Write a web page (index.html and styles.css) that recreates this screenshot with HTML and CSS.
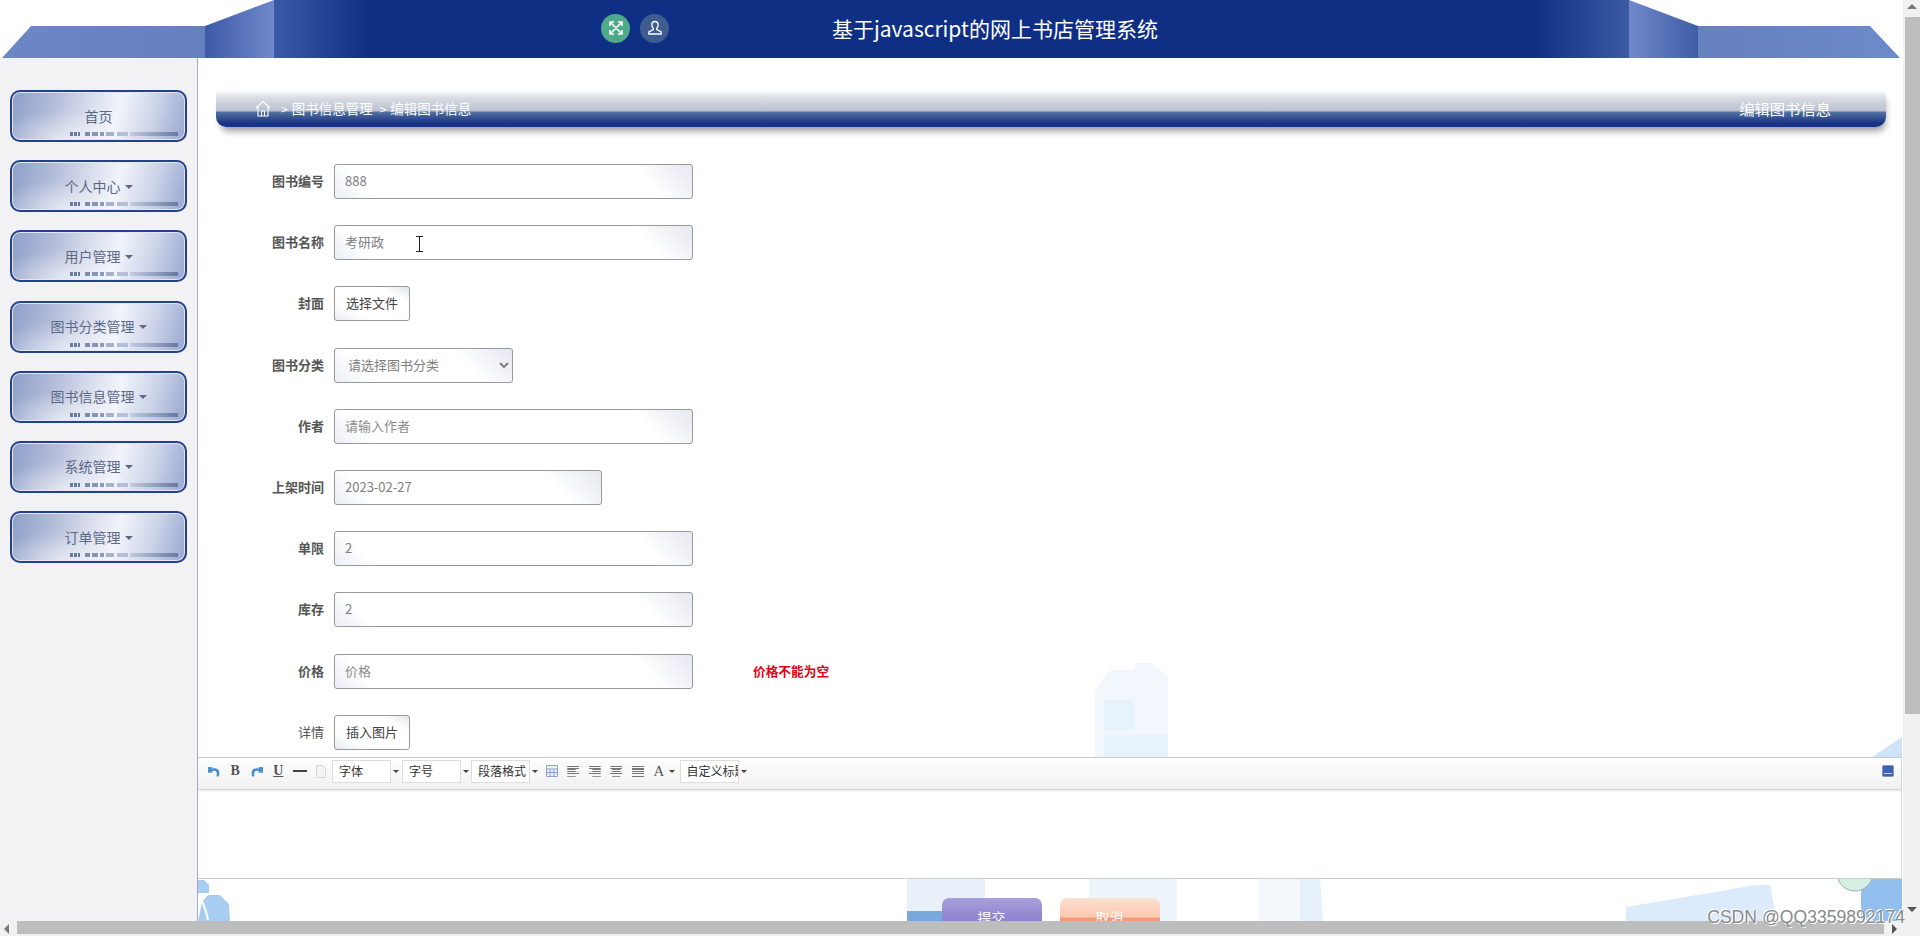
FILE: index.html
```html
<!DOCTYPE html>
<html lang="zh-CN">
<head>
    <meta charset="UTF-8">
    <title>基于javascript的网上书店管理系统</title>
    <link rel="stylesheet" href="styles.css">
</head>
<body>
<div class="page">
    <div class="viewport">
        <!-- 顶部 -->
        <header class="header">
            <div class="wing wing-left"></div>
            <div class="block block-left"></div>
            <div class="head-main">
                <span class="round round-green">
                    <svg width="16" height="16" viewBox="0 0 16 16" fill="none" stroke="#fff" stroke-width="1.6"><path d="M2 2l12 12M14 2L2 14M2 6V2h4M10 2h4v4M14 10v4h-4M6 14H2v-4"/></svg>
                </span>
                <span class="round round-blue">
                    <svg width="16" height="16" viewBox="0 0 16 16" fill="none" stroke="#fff" stroke-width="1.3"><path d="M8 1.500c-2 0-3.200 1.500-3.200 3.400 0 1.500.7 2.700 1.500 3.400v1.200L1.800 12v2h12.400v-2l-4.500-2.500V8.300c.8-.7 1.500-1.900 1.500-3.400 0-1.900-1.200-3.400-3.200-3.400z"/></svg>
                </span>
                <h1 class="title">基于javascript的网上书店管理系统</h1>
            </div>
            <div class="block block-right"></div>
            <div class="wing wing-right"></div>
        </header>

        <div class="content">
            <!-- 左侧菜单 -->
            <nav class="sidebar">
                <a class="menu-item"><span>首页</span><i class="menu-bar"></i></a>
                <a class="menu-item"><span class="caret">个人中心</span><i class="menu-bar"></i></a>
                <a class="menu-item"><span class="caret">用户管理</span><i class="menu-bar"></i></a>
                <a class="menu-item"><span class="caret">图书分类管理</span><i class="menu-bar"></i></a>
                <a class="menu-item"><span class="caret">图书信息管理</span><i class="menu-bar"></i></a>
                <a class="menu-item"><span class="caret">系统管理</span><i class="menu-bar"></i></a>
                <a class="menu-item"><span class="caret">订单管理</span><i class="menu-bar"></i></a>
            </nav>

            <main class="main">
                <!-- 背景图 -->
                <svg class="backdrop" width="1705" height="863" viewBox="198 58 1705 863">
                    <path fill="#f1f7fc" d="M1095 690l15-20h24l2-7h16l16 14v80h-73z"/>
                    <path fill="#e6f3fb" d="M1104 700h30v30h-30zM1104 735h64v22h-64z"/>
                    <path fill="#cfe3f8" d="M1872 757l30-20v20z"/>
                    <path fill="#a9cdf0" d="M198 880h6l5 5v8h-11zM202 902l6-7h12l9 9 1 17h-32z"/>
                    <path fill="none" stroke="#fff" stroke-width="2" d="M200 898c4 6 6 12 8 22"/>
                    <path fill="#e8f1fa" d="M907 879h78v42h-78z"/>
                    <path fill="#7aa8de" d="M907 911h36v10h-36z"/>
                    <path fill="#edf5fb" d="M1089 879h88v42h-88z"/>
                    <path fill="#f5f9fd" d="M1258 879h42v42h-42z"/>
                    <path fill="#e6f1fb" d="M1300 879h20l3 42h-23z"/>
                    <path fill="#dcebfb" d="M1626 907l130-22h14l7 36h-151z"/>
                    <path fill="#93bfee" d="M1861 879h41v42h-41z"/>
                    <circle cx="1855" cy="873" r="18" fill="#d6efe4" stroke="#93b5a8"/>
                </svg>

                <div class="breadcrumb">
                    <div class="crumbs">
                        <svg width="16" height="17" viewBox="0 0 16 17" fill="none" stroke="#fff" stroke-width="1.1"><path d="M1 8l7-6.500L15 8M3 7v9h10V7M6.500 16v-5M9.500 16v-5M6.500 11h3"/></svg>
                        <span class="sep">&gt;</span><span>图书信息管理</span><span class="sep">&gt;</span><span>编辑图书信息</span>
                    </div>
                    <div class="crumb-title">编辑图书信息</div>
                </div>

                <form class="form">
                    <div class="row"><label>图书编号</label><input class="input" value="888"></div>
                    <div class="row">
                        <label>图书名称</label><input class="input" value="考研政">
                        <svg class="ibeam" width="9" height="16" viewBox="0 0 9 16" fill="none" stroke="#222"><path d="M1 .5h7M4.500.5v15M1 15.500h7"/></svg>
                    </div>
                    <div class="row"><label>封面</label><button type="button" class="btn-plain">选择文件</button></div>
                    <div class="row">
                        <label>图书分类</label>
                        <select class="input input-select"><option>请选择图书分类</option></select>
                    </div>
                    <div class="row"><label>作者</label><input class="input" placeholder="请输入作者"></div>
                    <div class="row"><label>上架时间</label><input class="input input-date" value="2023-02-27"></div>
                    <div class="row"><label>单限</label><input class="input" value="2"></div>
                    <div class="row"><label>库存</label><input class="input" value="2"></div>
                    <div class="row"><label>价格</label><input class="input" placeholder="价格"><span class="error">价格不能为空</span></div>
                    <div class="row"><label class="label-thin">详情</label><button type="button" class="btn-plain">插入图片</button></div>
                </form>

                <!-- 富文本编辑器 -->
                <div class="editor">
                    <div class="toolbar">
                        <span class="tool">
                            <svg width="12" height="11" viewBox="0 0 12 11" fill="#4a90d0"><path d="M0 1l5 .2-1.500 1.500C6 2 9 2.200 10.500 4c1.300 1.700 1 4.300.3 6.500H8.500C9 8.500 9 6.500 8 5.500 7 4.600 5.300 4.600 3.700 5.300L5 6.800H0z"/></svg>
                        </span>
                        <span class="tool tool-text">B</span>
                        <span class="tool">
                            <svg width="12" height="11" viewBox="0 0 12 11" fill="#4a90d0"><path d="M12 1l-5 .2 1.500 1.500C6 2 3 2.200 1.500 4 .2 5.700.5 8.300 1.200 10.500h2.300C3 8.500 3 6.500 4 5.500c1-.9 2.700-.9 4.300-.2L7 6.800h5z"/></svg>
                        </span>
                        <span class="tool tool-text tool-under">U</span>
                        <span class="tool"><i class="hr-line"></i></span>
                        <span class="tool">
                            <svg width="10" height="13" viewBox="0 0 10 13" fill="#f4f4f4" stroke="#d6d6d6"><path d="M.5.5h6l3 3v9h-9z"/></svg>
                        </span>
                        <span class="combo"><span class="combo-label">字体</span><i class="arrow"></i></span>
                        <span class="combo"><span class="combo-label">字号</span><i class="arrow"></i></span>
                        <span class="combo combo-third"><span class="combo-label">段落格式</span><i class="arrow"></i></span>
                        <span class="tool">
                            <svg width="12" height="12" viewBox="0 0 12 12" fill="#eef1fb" stroke="#8c9fd8"><path d="M.5.5h11v11H.5zM.5 4h11M.5 7.500h11M4 4v7.500M8 4v7.500"/></svg>
                        </span>
                        <span class="tool"><i class="lines lines-left"></i></span>
                        <span class="tool"><i class="lines lines-right"></i></span>
                        <span class="tool"><i class="lines lines-center"></i></span>
                        <span class="tool"><i class="lines"></i></span>
                        <span class="tool tool-text tool-color">A<i class="arrow"></i></span>
                        <span class="combo combo-last"><span class="combo-label">自定义标题</span><i class="arrow"></i></span>
                        <span class="tool tool-end">
                            <svg width="12" height="12" viewBox="0 0 12 12"><rect x=".5" y=".5" width="11" height="11" rx="1" fill="#3d62b8" stroke="#8897b8"/><path d="M2 8.500h8" stroke="#c8d2ee"/></svg>
                        </span>
                    </div>
                    <div class="edit-area"></div>
                </div>

                <div class="actions">
                    <button type="button" class="btn btn-submit">提交</button>
                    <button type="button" class="btn btn-cancel">取消</button>
                </div>
            </main>
        </div>
    </div>

    <!-- 滚动条 -->
    <div class="vscroll">
        <i class="tri tri-up"></i>
        <div class="vthumb"></div>
        <i class="tri tri-down"></i>
    </div>
    <div class="hscroll">
        <i class="tri tri-left"></i>
        <div class="hthumb"></div>
        <i class="tri tri-right"></i>
    </div>
    <div class="corner"></div>
    <div class="watermark">CSDN @QQ3359892174</div>
</div>
</body>
</html>
```

FILE: styles.css
```css
* {
    box-sizing: border-box;
}
html, body {
    margin: 0;
    height: 100%;
    overflow: hidden;
    background-color: #fff;
}
body {
    font-family: "Noto Sans CJK SC", "Liberation Sans", sans-serif;
    font-size: 13px;
    color: #555;
}
.page {
    position: relative;
    display: grid;
    grid-template-columns: 1903px 17px;
    grid-template-rows: 921px 15px;
    width: 1920px;
    height: 936px;
}
.viewport {
    display: flex;
    flex-direction: column;
    min-height: 0;
}

/* 顶部 */
.header {
    display: flex;
    flex: 0 0 58px;
    padding: 0 3px 0 2px;
}
.wing {
    width: 203px;
    margin-top: 26px;
}
.wing-left {
    background: linear-gradient(to right, #6c86c6, #6680bf);
    clip-path: polygon(29px 0, 100% 0, 100% 100%, 0 100%);
}
.wing-right {
    width: 202px;
    background: linear-gradient(to right, #6780be, #6c8aca);
    clip-path: polygon(0 0, 172px 0, 100% 100%, 0 100%);
}
.block {
    width: 69px;
}
.block-left {
    background: linear-gradient(to right, #3d5aa6, #7089cb);
    clip-path: polygon(0 26px, 100% 0, 100% 100%, 0 100%);
}
.block-right {
    background: linear-gradient(to right, #7089ca, #3f5da6);
    clip-path: polygon(0 0, 100% 26px, 100% 100%, 0 100%);
}
.head-main {
    flex: 1;
    display: flex;
    align-items: center;
    gap: 10px;
    padding-left: 327px;
    background: linear-gradient(to right, #3a5aa8, #0f2f85 7%, #0f2f85 93%, #3b5ba3);
}
.round {
    display: flex;
    align-items: center;
    justify-content: center;
    width: 29px;
    height: 29px;
    margin-top: -2px;
    border-radius: 50%;
}
.round-green {
    background-color: #4fa98a;
}
.round-blue {
    background-color: #3f5c90;
}
.title {
    margin: -2px 0 0 153px;
    font-size: 21px;
    font-weight: 400;
    color: #fff;
}

.content {
    flex: 1;
    display: flex;
    min-height: 0;
}

/* 左侧菜单 */
.sidebar {
    flex: 0 0 198px;
    display: flex;
    flex-direction: column;
    gap: 18.2px;
    padding: 32px 0 0 10px;
    background-color: #f2f1f3;
    border-right: 1px solid #a3a8d4;
}
.menu-item {
    position: relative;
    display: flex;
    align-items: center;
    justify-content: center;
    width: 177px;
    height: 52px;
    padding-bottom: 1px;
    font-size: 14px;
    color: #5b6886;
    border: 2px solid #24418f;
    border-radius: 10px;
    background:
        radial-gradient(ellipse 70px 30px at 30% 100%, rgba(255, 255, 255, .55), transparent),
        linear-gradient(105deg, #8d9ec9 0%, #b3bdd9 24%, #d6dbec 42%, #f2f4fb 60%, #cbd3e8 80%, #98a7d0 100%);
    box-shadow: inset 0 0 0 1px #e4e7f2;
}
.caret::after {
    content: "";
    display: inline-block;
    margin-left: 4px;
    vertical-align: 3px;
    border: 4px solid transparent;
    border-top-color: #5b6886;
    border-bottom: 0;
}
.menu-bar {
    position: absolute;
    right: 7px;
    bottom: 4px;
    width: 108px;
    height: 4px;
    background: linear-gradient(to right,
        #66799f 0 3px, transparent 3px 4px, #66799f 4px 7px, transparent 7px 8px,
        #66799f 8px 10px, transparent 10px 15px, #7c8bb0 15px 20px, transparent 20px 22px,
        #8695b8 22px 28px, transparent 28px 30px, #8e9bc0 30px 34px, transparent 34px 36px,
        #a7b2cf 36px 44px, transparent 44px 47px, #b5bfd8 47px 58px, transparent 58px 60px,
        #c3cbe0 60px, #66799f 100%);
}

/* 主体 */
.main {
    position: relative;
    flex: 1;
    min-width: 0;
    overflow: hidden;
    background-color: #fff;
}
.backdrop {
    position: absolute;
    top: 0;
    left: 0;
}
.breadcrumb {
    position: relative;
    display: flex;
    align-items: center;
    justify-content: space-between;
    height: 37px;
    margin: 32px 17px 37px 18px;
    padding: 0 55px 0 39px;
    font-size: 13.5px;
    color: #fff;
    border-radius: 0 0 10px 10px;
    background: linear-gradient(to bottom, #fff 0, #d9dce3 8px, #b9c0cf 21px, #52719f 22px, #1a3585 33px, #15308a 37px);
    box-shadow: 2px 7px 7px -3px rgba(0, 0, 0, .4);
}
.crumbs {
    display: flex;
    align-items: center;
    gap: 4px;
    margin-top: -1px;
}
.sep {
    margin-left: 3px;
    font-size: 12px;
}
.crumbs .sep:first-of-type {
    margin-left: 6px;
}
.crumb-title {
    margin-top: -1px;
    font-size: 15.3px;
}

/* 表单 */
.form {
    position: relative;
    display: flex;
    flex-direction: column;
    gap: 26.2px;
}
.row {
    position: relative;
    display: flex;
    align-items: center;
    height: 35px;
}
.row label {
    flex: 0 0 126px;
    margin-right: 10px;
    padding-bottom: 2px;
    text-align: right;
    font-weight: 700;
    color: #555;
}
.row label.label-thin {
    font-weight: 400;
}
.input {
    width: 359px;
    height: 35px;
    padding: 0 10px 2px;
    font-family: inherit;
    font-size: 13px;
    color: #808080;
    border: 1px solid #999;
    border-radius: 3px;
    outline: none;
    background: linear-gradient(48deg, #eceef6 0, #fff 30px, #fff calc(100% - 45px), #e6e8f1 100%);
}
.input::placeholder {
    color: #8c8c8c;
}
.input-select {
    width: 179px;
    padding-left: 9px;
}
.input-date {
    width: 268px;
}
.btn-plain {
    width: 76px;
    height: 35px;
    padding: 0 0 2px;
    font-family: inherit;
    font-size: 13px;
    color: #444;
    border: 1px solid #999;
    border-radius: 3px;
    background: linear-gradient(to top right, #e8eaf2 0%, #fff 25%, #fff 78%, #e2e4ed 100%);
}
.error {
    margin-left: 60px;
    padding-bottom: 2px;
    font-size: 12.7px;
    font-weight: 700;
    color: #e60012;
}
.ibeam {
    position: absolute;
    left: 217px;
    top: 11px;
}

/* 编辑器 */
.editor {
    position: relative;
    margin: 7px 1px 0 0;
    background-color: #fff;
    border: 1px solid #ccc;
    border-right-color: #ddd;
    border-left: 0;
}
.toolbar {
    display: flex;
    align-items: center;
    height: 32px;
    padding: 0 0 4px 5px;
    background: linear-gradient(to bottom, #fff, #f0f0f0);
    border-bottom: 1px solid #d6d6d6;
    box-shadow: 0 1px 2px rgba(0, 0, 0, .1);
}
.tool {
    flex: 0 0 21.5px;
    display: flex;
    align-items: center;
    justify-content: center;
}
.tool-text {
    font-family: "Liberation Serif", serif;
    font-size: 14px;
    font-weight: 700;
    color: #555;
}
.tool-under {
    text-decoration: underline;
}
.tool-color {
    position: relative;
    font-size: 15px;
    font-weight: 400;
    flex-basis: 33px;
    justify-content: flex-start;
    padding-left: 5px;
    gap: 5px;
}
.tool-end {
    margin-left: auto;
    margin-right: 2px;
}
.hr-line {
    width: 14px;
    height: 2px;
    background-color: #444;
}
.combo {
    display: flex;
    align-items: center;
    width: 67px;
    height: 23px;
    margin-right: 3px;
    color: #333;
    font-size: 12px;
}
.combo-label {
    flex: 0 0 59px;
    height: 23px;
    padding-left: 6px;
    line-height: 20px;
    overflow: hidden;
    white-space: nowrap;
    background-color: #fff;
    border: 1px solid #ddd;
}
.combo .arrow {
    margin-left: 2px;
}
.combo-third {
    margin-left: -1px;
}
.combo-last {
    margin-left: -2px;
}
.arrow {
    display: inline-block;
    border: 3px solid transparent;
    border-top-color: #444;
    border-bottom: 0;
}
.lines {
    width: 12px;
    height: 11px;
    background: repeating-linear-gradient(to bottom, #777 0 1px, transparent 1px 2.500px);
}
.lines-left {
    clip-path: polygon(0 0, 100% 0, 100% 30%, 70% 30%, 70% 55%, 100% 55%, 100% 75%, 70% 75%, 70% 100%, 0 100%);
}
.lines-right {
    clip-path: polygon(0 0, 100% 0, 100% 100%, 30% 100%, 30% 75%, 0 75%, 0 55%, 30% 55%, 30% 30%, 0 30%);
}
.lines-center {
    clip-path: polygon(0 0, 100% 0, 100% 30%, 85% 30%, 85% 55%, 100% 55%, 100% 75%, 85% 75%, 85% 100%, 15% 100%, 15% 75%, 0 75%, 0 55%, 15% 55%, 15% 30%, 0 30%);
}
.edit-area {
    height: 88px;
}

/* 底部按钮 */
.actions {
    position: relative;
    display: flex;
    justify-content: center;
    gap: 18px;
    margin-top: 19px;
}
.btn {
    width: 100px;
    height: 40px;
    padding: 0 0 2px;
    font-family: inherit;
    font-size: 14px;
    color: #fff;
    border: 0;
    border-radius: 7px 7px 0 0;
}
.btn-submit {
    background: linear-gradient(to bottom, #a99fdc, #8f83cc 22px, #7f70c0);
}
.btn-cancel {
    background: linear-gradient(to bottom, #fde0d2, #fdc8b0 19px, #f39a78 20px, #f39a78);
}

/* 滚动条 */
.vscroll {
    position: relative;
    display: flex;
    flex-direction: column;
    align-items: flex-end;
    background-color: #f1f1f1;
}
.vthumb {
    width: 15px;
    height: 697px;
    margin-top: 17px;
    background-color: #bdbdbd;
}
.hscroll {
    position: relative;
    display: flex;
    background-color: #f1f1f1;
}
.hthumb {
    width: 1867px;
    margin-left: 17px;
    height: 13px;
    background-color: #bdbdbd;
}
.corner {
    background-color: #f1f1f1;
}
.tri {
    position: absolute;
    border: 5px solid transparent;
}
.tri-up {
    top: 4px;
    right: 3px;
    border-top: 0;
    border-bottom-color: #777;
}
.tri-down {
    bottom: 9px;
    right: 3px;
    border-bottom: 0;
    border-top-color: #555;
}
.tri-left {
    top: 3px;
    left: 4px;
    border-left: 0;
    border-right-color: #777;
}
.tri-right {
    top: 3px;
    left: 1892px;
    border-right: 0;
    border-left-color: #555;
}
.watermark {
    position: absolute;
    right: 15px;
    bottom: 8px;
    font-family: "Liberation Sans", sans-serif;
    font-size: 17.6px;
    color: #8a8a8a;
    text-shadow: 1px 1px 0 #fff, -1px -1px 0 #fff;
}
```
